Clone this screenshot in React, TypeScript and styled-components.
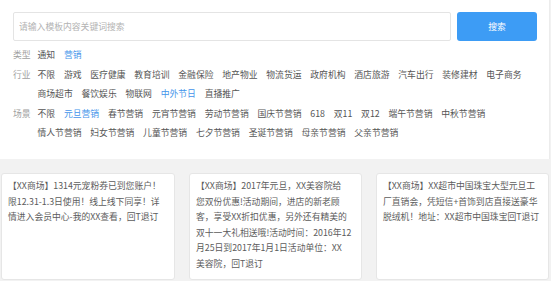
import React from "react";
import styled, { createGlobalStyle } from "styled-components";

const Global = createGlobalStyle`
  html, body { margin: 0; padding: 0; background: #f2f2f2; }
  body { font-family: "Noto Sans CJK SC", "Noto Sans", sans-serif; }
  * { box-sizing: border-box; }
`;

const Page = styled.div`
  width: 551px;
  height: 281px;
  overflow: hidden;
  background: #f2f2f2;
`;

const TopPanel = styled.div`
  background: #fff;
  width: 550px;
  height: 159px;
  padding: 12px 12px 0 13px;
  border-right: 1px solid #ececec;
`;

const SearchBar = styled.div`
  display: flex;
  gap: 6px;
  height: 29px;
`;

const SearchInput = styled.input`
  width: 439px;
  height: 29px;
  border: 1px solid #e4e4e4;
  border-radius: 2px;
  padding: 0 5px;
  font-family: inherit;
  font-size: 8.8px;
  color: #333;
  outline: none;
  &::placeholder { color: #b3b3b3; }
`;

const SearchButton = styled.button`
  width: 80px;
  height: 29px;
  border: none;
  border-radius: 3px;
  background: #3d9cf5;
  color: #fff;
  font-family: inherit;
  font-size: 8.8px;
  cursor: pointer;
`;

const Filters = styled.div`
  margin-top: 4px;
  display: flex;
  flex-direction: column;
`;

const FilterRow = styled.div`
  display: flex;
  align-items: flex-start;
`;

const FilterLabel = styled.div`
  width: 24.5px;
  flex: none;
  font-size: 8.8px;
  line-height: 19.6px;
  color: #a0a0a0;
`;

const Items = styled.div`
  width: 500.5px;
  display: flex;
  flex-wrap: wrap;
  column-gap: 8.8px;
`;

const Item = styled.span<{ $active?: boolean }>`
  font-size: 8.8px;
  line-height: 19.6px;
  color: ${(p) => (p.$active ? "#4394ea" : "#555")};
  white-space: nowrap;
  cursor: pointer;
`;

const Cards = styled.div`
  display: grid;
  grid-template-columns: 174px 173px 173px;
  column-gap: 14px;
  padding: 14px 2px 0 1px;
`;

const Card = styled.div`
  height: 107px;
  background: #fff;
  border: 1px solid #e6e6e6;
  border-radius: 3px;
  padding: 4px 6px 0 6px;
`;

const CardLine = styled.div`
  font-size: 8.8px;
  line-height: 15.6px;
  color: #5c5c5c;
  white-space: nowrap;
`;

const filters: { label: string; items: string[]; active: string }[] = [
  { label: "类型", items: ["通知", "营销"], active: "营销" },
  {
    label: "行业",
    items: [
      "不限", "游戏", "医疗健康", "教育培训", "金融保险", "地产物业", "物流货运",
      "政府机构", "酒店旅游", "汽车出行", "装修建材", "电子商务", "商场超市",
      "餐饮娱乐", "物联网", "中外节日", "直播推广",
    ],
    active: "中外节日",
  },
  {
    label: "场景",
    items: [
      "不限", "元旦营销", "春节营销", "元宵节营销", "劳动节营销", "国庆节营销",
      "618", "双11", "双12", "端午节营销", "中秋节营销", "情人节营销",
      "妇女节营销", "儿童节营销", "七夕节营销", "圣诞节营销", "母亲节营销", "父亲节营销",
    ],
    active: "元旦营销",
  },
];

const cards: string[][] = [
  [
    "【XX商场】1314元宠粉券已到您账户！",
    "限12.31-1.3日使用！线上线下同享！详",
    "情进入会员中心-我的XX查看，回T退订",
  ],
  [
    "【XX商场】2017年元旦，XX美容院给",
    "您双份优惠!活动期间，进店的新老顾",
    "客，享受XX折扣优惠，另外还有精美的",
    "双十一大礼相送哦!活动时间：2016年12",
    "月25日到2017年1月1日活动单位：XX",
    "美容院，回T退订",
  ],
  [
    "【XX商场】XX超市中国珠宝大型元旦工",
    "厂直销会，凭短信+首饰到店直接送豪华",
    "脱绒机！地址：XX超市中国珠宝回T退订",
  ],
];

export default function App() {
  return (
    <Page>
      <Global />
      <TopPanel>
        <SearchBar>
          <SearchInput placeholder="请输入模板内容关键词搜索" />
          <SearchButton>搜索</SearchButton>
        </SearchBar>
        <Filters>
          {filters.map((f) => (
            <FilterRow key={f.label}>
              <FilterLabel>{f.label}</FilterLabel>
              <Items>
                {f.items.map((it) => (
                  <Item key={it} $active={it === f.active}>
                    {it}
                  </Item>
                ))}
              </Items>
            </FilterRow>
          ))}
        </Filters>
      </TopPanel>
      <Cards>
        {cards.map((lines, i) => (
          <Card key={i}>
            {lines.map((l, j) => (
              <CardLine key={j}>{l}</CardLine>
            ))}
          </Card>
        ))}
      </Cards>
    </Page>
  );
}
